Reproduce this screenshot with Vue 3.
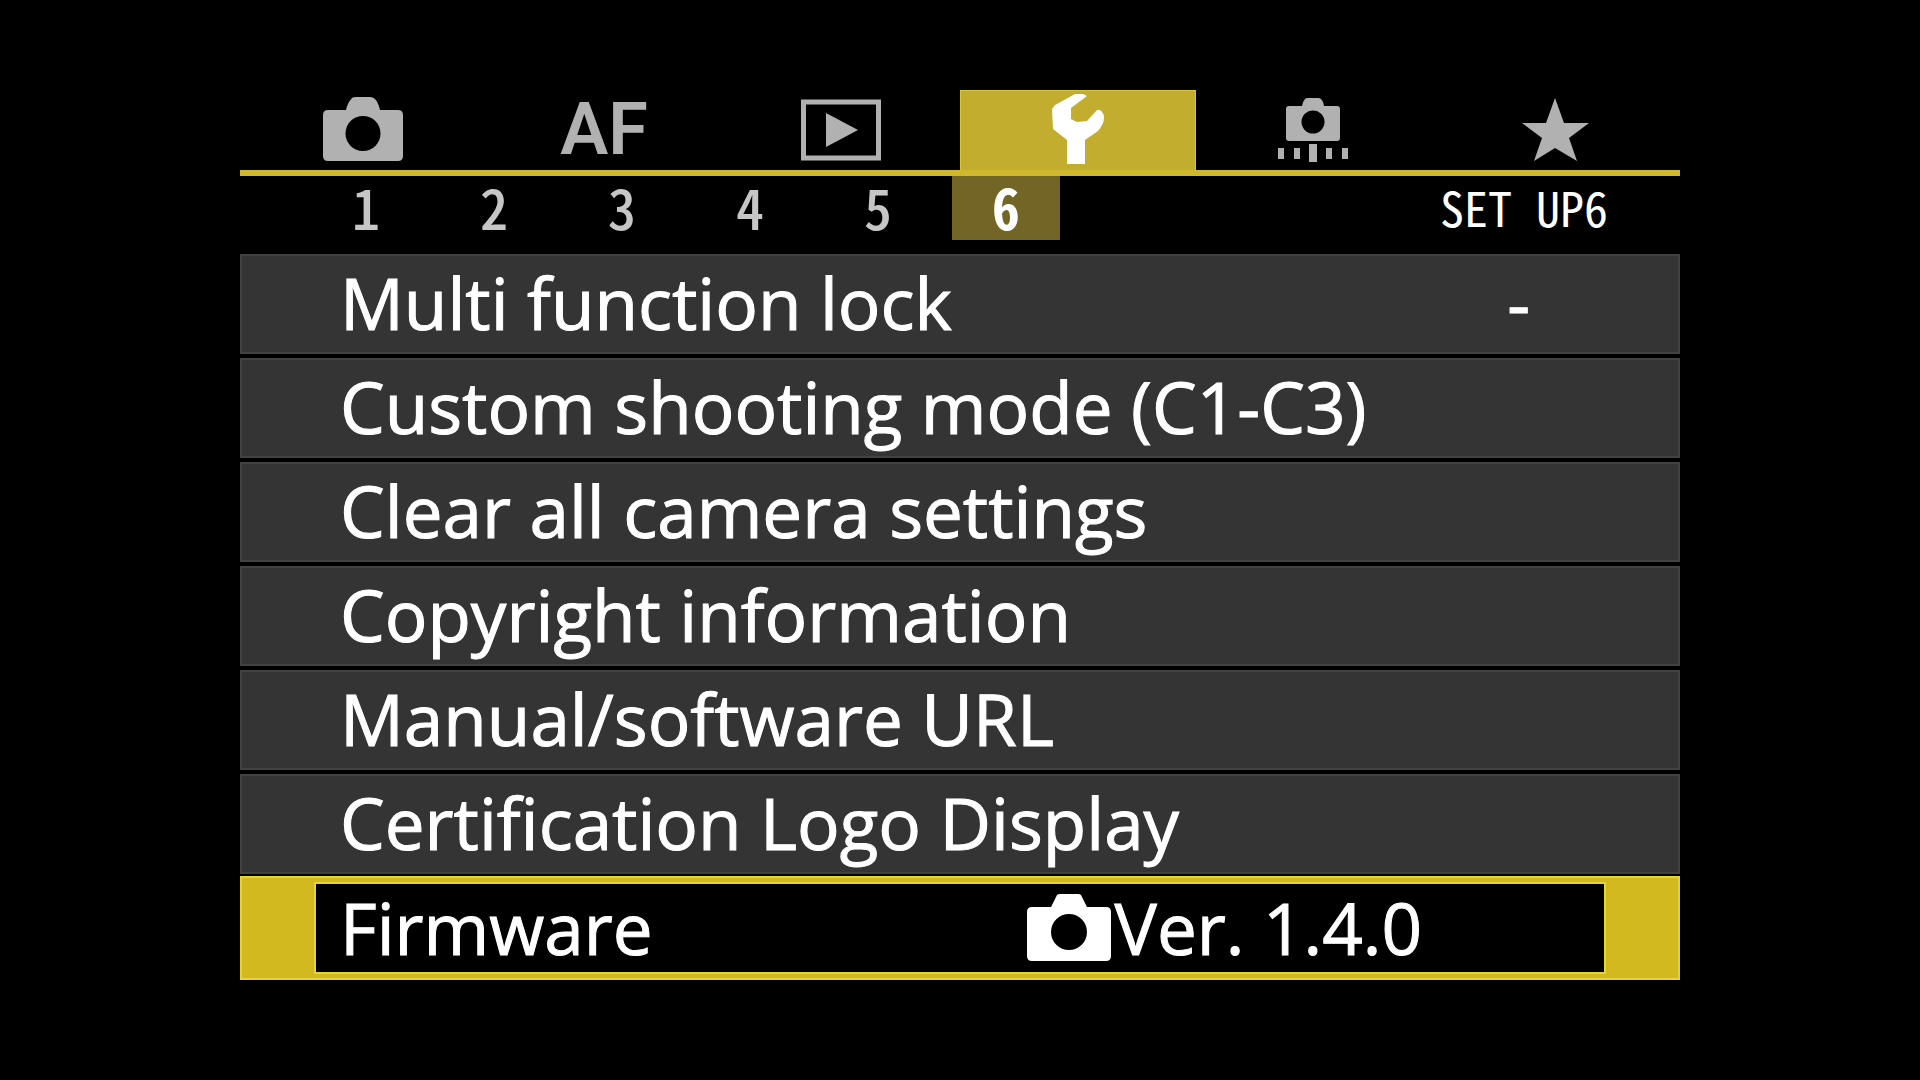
<script setup>
import { ref } from 'vue'

const tabs = [
  { id: 'shoot', label: 'Shooting' },
  { id: 'af', label: 'AF' },
  { id: 'play', label: 'Playback' },
  { id: 'setup', label: 'Set up' },
  { id: 'custom', label: 'Custom functions' },
  { id: 'star', label: 'My menu' }
]
const pages = [1, 2, 3, 4, 5, 6]
const rows = [
  { label: 'Multi function lock', value: '-' },
  { label: 'Custom shooting mode (C1-C3)' },
  { label: 'Clear all camera settings' },
  { label: 'Copyright information' },
  { label: 'Manual/software URL' },
  { label: 'Certification Logo Display' },
  { label: 'Firmware', value: 'Ver. 1.4.0', camera: true }
]
const activeTab = ref('setup')
const activePage = ref(6)
const activeRow = ref(6)
</script>

<template>
  <main class="screen">
    <nav class="tabs">
      <button
        v-for="t in tabs"
        :key="t.id"
        class="tab"
        :class="{ active: t.id === activeTab }"
        :aria-label="t.label"
        @click="activeTab = t.id"
      >
        <span v-if="t.id === 'af'" class="af">AF</span>
        <svg v-else class="icon" viewBox="0 0 100 80" aria-hidden="true">
          <path
            v-if="t.id === 'shoot'"
            fill-rule="evenodd"
            d="M18 20H36C37 15 39 11 42 8Q43 7 46 7H60Q63 7 65 9C68 12 69 16 70 20H88Q93 20 93 25V66Q93 71 88 71H18Q13 71 13 66V25Q13 20 18 20ZM53 26A17.5 17.5 0 1 0 53 61A17.5 17.5 0 1 0 53 26Z"
          />
          <template v-else-if="t.id === 'play'">
            <rect x="13.5" y="12" width="75" height="56" fill="none" stroke="currentColor" stroke-width="5" />
            <path d="M36 23L68 40L36 57Z" />
          </template>
          <path
            v-else-if="t.id === 'setup'"
            d="M47 4H55L59 6L43 18V29L49 32L59 31L69 20Q72 19 74 22Q76 24 76 28Q76 34 70 41L57 50V74H39V50L25 39L24 19L27 15Z"
          />
          <template v-else-if="t.id === 'custom'">
            <path
              fill-rule="evenodd"
              d="M19 16H32Q33 11 35 9Q36 8 38 8H48Q50 8 51 9Q54 12 54 16H67Q70 16 70 19V48Q70 51 67 51H19Q16 51 16 48V19Q16 16 19 16ZM43 20.500A11.500 11.500 0 1 0 43 43.500A11.500 11.500 0 1 0 43 20.500Z"
            />
            <path d="M8 58h6v11h-6zM24 58h6v11h-6zM39 54h8v18h-8zM56 58h6v11h-6zM72 58h6v11h-6z" />
          </template>
          <path v-else d="M45 8L54 33H79L59 48L67 71L45 58L24 71L32 48L12 33H36Z" />
        </svg>
      </button>
    </nav>

    <div class="pages">
      <button
        v-for="p in pages"
        :key="p"
        class="page"
        :class="{ active: p === activePage }"
        @click="activePage = p"
      >{{ p }}</button>
      <h1 class="title">SET UP6</h1>
    </div>

    <div class="rows">
      <button
        v-for="(r, i) in rows"
        :key="r.label"
        class="row"
        :class="{ selected: i === activeRow }"
        @click="activeRow = i"
      >
        <span class="inner">
          <span class="label">{{ r.label }}</span>
          <span v-if="r.value" class="value" :class="{ version: r.camera }">
            <svg v-if="r.camera" class="camera" viewBox="0 0 84 68" aria-hidden="true">
              <path
                fill-rule="evenodd"
                d="M5 13H24L30 1Q31 0 33 0H51Q53 0 54 1L60 13H79Q84 13 84 18V62Q84 67 79 67H5Q0 67 0 62V18Q0 13 5 13ZM42 20A18 18 0 1 0 42 56A18 18 0 1 0 42 20Z"
              />
            </svg>
            {{ r.value }}
          </span>
        </span>
      </button>
    </div>
  </main>
</template>

<style>
html,
body {
  background: #000;
}
</style>

<style scoped>
.screen {
  width: 75%;
  margin: 0 auto;
  padding: 90px 0 100px;
  color: #fff;
  font-family: "Open Sans", "Noto Sans", sans-serif;
}
button {
  margin: 0;
  padding: 0;
  border: 0;
  background: none;
  color: inherit;
  font: inherit;
  cursor: pointer;
}
svg {
  display: block;
  flex: none;
  fill: currentColor;
}
.tabs {
  display: grid;
  grid-template-columns: repeat(6, 1fr);
  height: 80px;
  border-bottom: 6px solid #cfb82c;
}
.tab {
  display: flex;
  align-items: center;
  justify-content: center;
  color: #b1b1b1;
}
.tab.active {
  margin-right: 4px;
  background: #c2ad2f;
  box-shadow: inset 1px 1px #d8c53c, inset -1px 0 #d8c53c;
  color: #fff;
}
.icon {
  width: 100px;
  height: 80px;
}
.af {
  padding-left: 8px;
  font-family: Roboto, sans-serif;
  font-size: 72px;
  font-weight: 600;
  line-height: 80px;
}
.pages {
  display: flex;
  align-items: center;
  gap: 20px;
  height: 64px;
  padding: 0 72px;
}
.page,
.title {
  padding-bottom: 4px;
  font-family: "Noto Sans CJK JP", sans-serif;
  font-feature-settings: "hwid";
  line-height: 60px;
}
.page {
  width: 108px;
  height: 64px;
  color: #c6c6c6;
  font-size: 56px;
  font-weight: 500;
}
.page.active {
  background: #736525;
  color: #fff;
  font-weight: 700;
}
.title {
  margin: 0 0 0 auto;
  font-size: 48px;
  font-weight: 400;
}
.rows {
  display: flex;
  flex-direction: column;
  gap: 4px;
  margin-top: 14px;
}
.row {
  display: flex;
  height: 100px;
  border: 2px solid #424242;
  background: #343434;
  font-size: 71px;
  line-height: 88px;
  text-align: left;
  -webkit-text-stroke: 1px currentColor;
}
.inner {
  display: flex;
  flex: 1;
  align-items: center;
  justify-content: space-between;
  padding: 0 74px 2px;
}
.label {
  padding-left: 24px;
  white-space: nowrap;
}
.value {
  display: flex;
  align-items: center;
  gap: 4px;
  padding-right: 74px;
  white-space: nowrap;
}
.row.selected {
  height: 104px;
  margin-top: -2px;
  border-color: #e6d334;
  padding: 6px 74px;
  background: #d2b91f;
}
.selected .inner {
  padding: 0;
  background: #000;
  box-shadow: 0 0 0 2px #e6d334;
}
.value.version {
  padding-right: 182px;
}
.camera {
  width: 84px;
  height: 68px;
}
</style>
